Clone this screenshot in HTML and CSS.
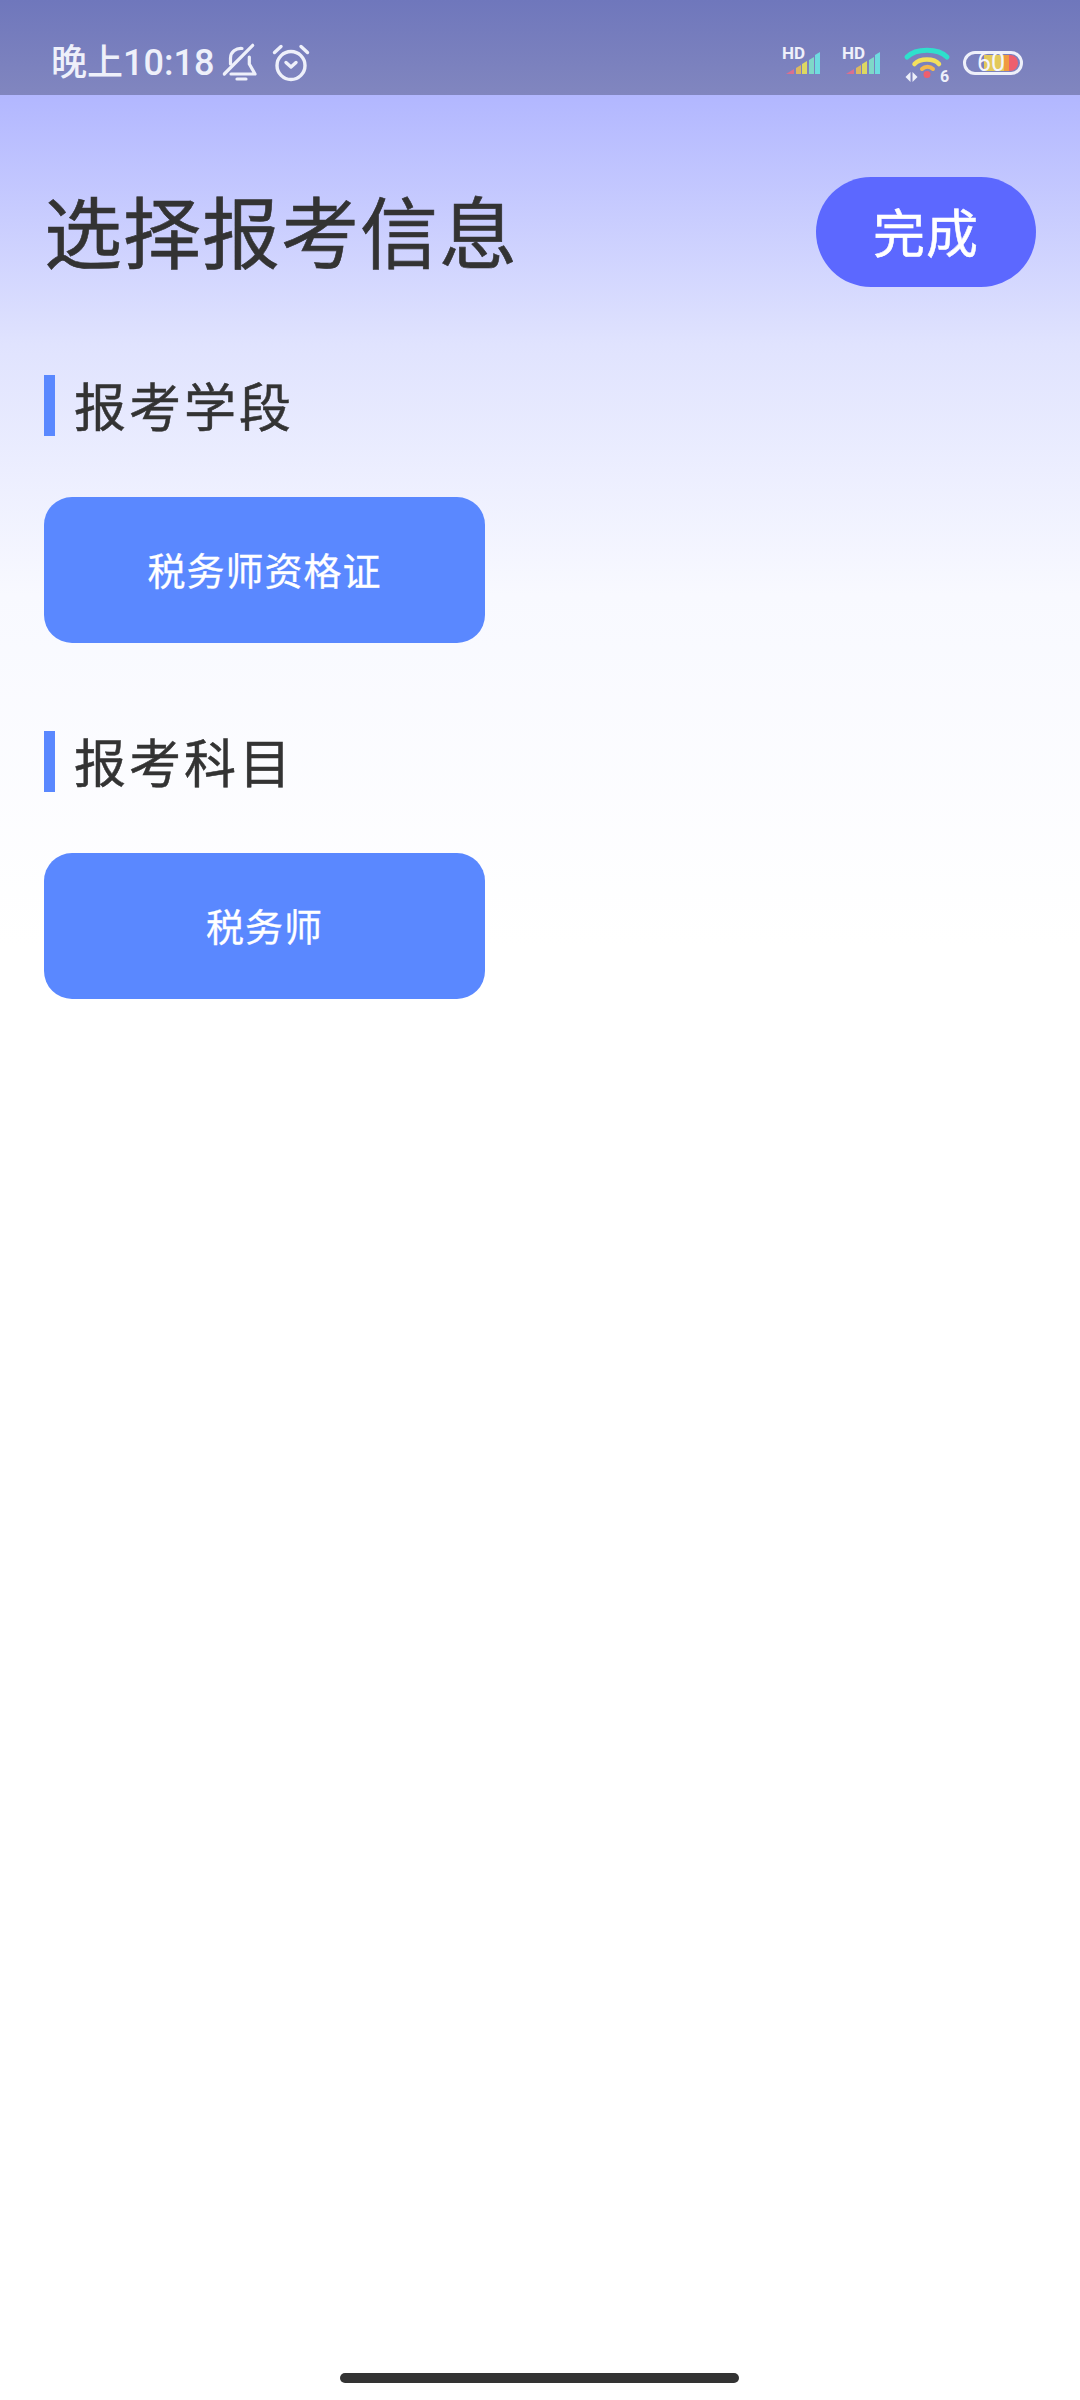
FILE: index.html
```html
<!DOCTYPE html>
<html lang="zh-CN">
<head>
    <meta charset="UTF-8">
    <meta name="viewport" content="width=device-width, initial-scale=1.0">
    <title>选择报考信息</title>
    <link rel="stylesheet" href="styles.css">
</head>
<body>
    <div class="status-bar">
        <div class="status-left">
            <span class="status-time">晚上10:18</span>
            <svg class="icon-bell" width="36" height="40" viewBox="0 0 36 40" fill="none" stroke="#eef0fa" stroke-width="3.2" stroke-linecap="round" stroke-linejoin="round">
                <path d="M8.500 21V15C8.500 9 14 5 20 5.500"/>
                <path d="M27.300 14V21L33 31H9"/>
                <path d="M2.300 31L30.700 2.300"/>
                <path d="M15 36h9"/>
            </svg>
            <svg class="icon-alarm" width="44" height="40" viewBox="0 0 44 40" fill="none" stroke="#eef0fa" stroke-width="3.400" stroke-linecap="round" stroke-linejoin="round">
                <circle cx="20" cy="22.500" r="14"/>
                <path d="M15 19.500l5 4.500 5-4.500"/>
                <path d="M3.500 9.500L10 3.500"/>
                <path d="M36.500 9.500L30 3.500"/>
            </svg>
        </div>
        <div class="status-right">
            <svg class="signal" width="40" height="40" viewBox="0 0 40 40">
                <text class="hd-label" x="1" y="16">HD</text>
                <path d="M5 31l8-5v5z" fill="#d9708f"/>
                <path d="M15 25l5-3v9h-5z" fill="#dcb95f"/>
                <path d="M21 21l5-3v13h-5z" fill="#dcd862"/>
                <path d="M28 17l5-3v17h-5z" fill="#7fd8c8"/>
                <path d="M34 12l5-3v22h-5z" fill="#6fdce0"/>
            </svg>
            <svg class="signal" width="40" height="40" viewBox="0 0 40 40">
                <text class="hd-label" x="1" y="16">HD</text>
                <path d="M5 31l8-5v5z" fill="#d9708f"/>
                <path d="M15 25l5-3v9h-5z" fill="#dcb95f"/>
                <path d="M21 21l5-3v13h-5z" fill="#dcd862"/>
                <path d="M28 17l5-3v17h-5z" fill="#7fd8c8"/>
                <path d="M34 12l5-3v22h-5z" fill="#6fdce0"/>
            </svg>
            <svg class="wifi" width="46" height="40" viewBox="0 0 46 40" fill="none" stroke-linecap="round">
                <path d="M3 14C12 5 34 5 43 14" stroke="#2fe0cc" stroke-width="5"/>
                <path d="M10.500 21C16 15 30 15 35 21" stroke="#f4e05c" stroke-width="4.500"/>
                <path d="M18 26C21 23 26 23 29 26" stroke="#f5b84e" stroke-width="4"/>
                <circle cx="23" cy="31.500" r="3.500" fill="#ee5f6e"/>
                <path d="M6.500 29v10l-5-5z" fill="#eef0fa"/>
                <path d="M8.500 39v-10l5 5z" fill="#eef0fa"/>
                <text class="wifi-num" x="36" y="39">6</text>
            </svg>
            <div class="battery">
                <div class="battery-fill"></div>
                <span class="battery-num">60</span>
            </div>
        </div>
    </div>

    <div class="content">
        <div class="header">
            <h1>选择报考信息</h1>
            <button class="done-btn" type="button">完成</button>
        </div>

        <div class="section">
            <h2>报考学段</h2>
            <div class="option">税务师资格证</div>
        </div>

        <div class="section">
            <h2>报考科目</h2>
            <div class="option">税务师</div>
        </div>
    </div>

    <div class="home-bar"></div>
</body>
</html>
```

FILE: styles.css
```css
body {
    font-family: "Noto Sans CJK SC", sans-serif;
    margin: 0;
    height: 2400px;
    display: flex;
    flex-direction: column;
    background-color: #fff;
    color: #333;
}
svg {
    overflow: visible;
}
.status-bar {
    height: 95px;
    flex-shrink: 0;
    display: flex;
    align-items: center;
    justify-content: space-between;
    padding: 31px 57px 0 51px;
    box-sizing: border-box;
    background: linear-gradient(#6f77bc, #8186bf);
}
.status-left, .status-right {
    display: flex;
    align-items: center;
}
.status-time {
    font-family: Roboto, "Noto Sans CJK SC", sans-serif;
    font-size: 36px;
    font-weight: 500;
    color: #eef0fa;
    line-height: 40px;
}
.icon-bell {
    margin-left: 8px;
}
.icon-alarm {
    margin-left: 13px;
}
.signal {
    margin-right: 20px;
}
.signal + .wifi {
    margin-left: 3px;
    margin-right: 13px;
}
.hd-label {
    font-family: Roboto, sans-serif;
    font-size: 17px;
    font-weight: 700;
    fill: #eef0fa;
}
.wifi-num {
    font-family: Roboto, sans-serif;
    font-size: 16px;
    font-weight: 700;
    fill: #eef0fa;
}
.battery {
    position: relative;
    width: 60px;
    height: 24px;
    box-sizing: border-box;
    border: 3px solid #eef0fa;
    border-radius: 12px;
}
.battery-fill {
    position: absolute;
    left: 18px;
    top: 1px;
    bottom: 1px;
    width: 34px;
    border-radius: 0 8px 8px 0;
    background: linear-gradient(90deg, #e3c95a 0, #e3c95a 58%, #f09a42 58%, #f09a42 74%, #ee5f6e 74%);
}
.battery-num {
    position: absolute;
    left: 11px;
    top: -5px;
    font-family: Roboto, sans-serif;
    font-size: 25px;
    line-height: 28px;
    color: #f4f5fc;
}
.content {
    flex: 1;
    padding: 0 44px;
    background: linear-gradient(#b2b7ff 0, #e0e3fe 250px, #f8f9ff 500px, #fff 850px);
}
.header {
    display: flex;
    align-items: center;
    justify-content: space-between;
    margin-top: 82px;
    height: 110px;
}
h1 {
    margin: 0;
    font-size: 78px;
    font-weight: 400;
    -webkit-text-stroke: 0.6px #333;
    line-height: 110px;
    letter-spacing: 1px;
    position: relative;
    top: -3px;
}
.done-btn {
    width: 220px;
    height: 110px;
    padding: 0 0 4px;
    border: none;
    border-radius: 55px;
    background-color: #5c68ff;
    color: #fff;
    font-family: inherit;
    font-size: 52px;
    font-weight: 400;
    -webkit-text-stroke: 0.5px #fff;
    letter-spacing: 1px;
}
.section {
    margin-top: 88px;
}
.section h2 {
    margin: 0;
    height: 61px;
    line-height: 60px;
    border-left: 11px solid #5a88ff;
    padding-left: 19px;
    font-size: 52px;
    font-weight: 400;
    -webkit-text-stroke: 0.5px #333;
    letter-spacing: 3px;
}
.option {
    width: 441px;
    height: 146px;
    margin-top: 61px;
    padding-bottom: 4px;
    box-sizing: border-box;
    display: flex;
    align-items: center;
    justify-content: center;
    background-color: #5a88ff;
    border-radius: 28px;
    color: #fff;
    font-size: 38px;
    font-weight: 400;
    -webkit-text-stroke: 0.3px #fff;
    letter-spacing: 1px;
}
.home-bar {
    position: absolute;
    left: 340px;
    top: 2373px;
    width: 399px;
    height: 10px;
    border-radius: 5px;
    background-color: #333;
}
```
